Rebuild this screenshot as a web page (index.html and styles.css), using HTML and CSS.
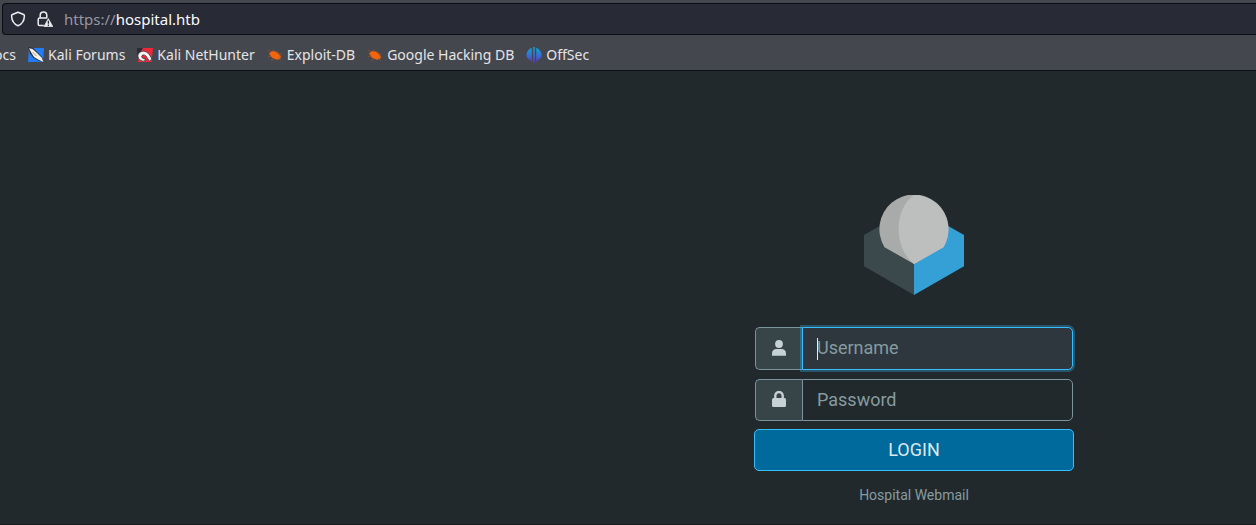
FILE: index.html
```html
<!DOCTYPE html>
<html lang="en">
<head>
<meta charset="utf-8">
<title>Hospital Webmail</title>
<link rel="stylesheet" href="styles.css">
</head>
<body>
<header class="browser">
  <div class="urlbar">
    <svg class="url-icon" viewBox="0 0 16 16" aria-hidden="true"><path d="M8 1.200 13.600 3.500Q14.400 3.800 14.400 5C14.200 10.200 11.400 13.400 8 14.800 4.600 13.400 1.800 10.200 1.600 5Q1.600 3.800 2.400 3.500Z" fill="none" stroke="#eeeef2" stroke-width="1.500" stroke-linejoin="round"/></svg>
    <svg class="url-icon" viewBox="0 0 16 16" aria-hidden="true"><path d="M3.200 7V4.400a3.300 3.300 0 0 1 6.600 0V7M6.800 14.600H2.600a1.400 1.400 0 0 1-1.400-1.400V8.500a1.400 1.400 0 0 1 1.400-1.400h7.600" fill="none" stroke="#eeeef2" stroke-width="1.500"/><path d="M11.300 7.500 16 15.800H6.800Z" fill="#eeeef2" stroke="#eeeef2" stroke-width=".6" stroke-linejoin="round"/><path d="M11.400 9.800v3M11.400 13.600v1.300" stroke="#282a36" stroke-width="1.300"/></svg>
    <div class="url"><span class="scheme">https://</span>hospital.htb</div>
  </div>
  <nav class="bookmarks">
    <a class="bookmark clipped" href="#">Kali Docs</a>
    <a class="bookmark" href="#">
      <svg class="favicon" viewBox="0 0 16 16" aria-hidden="true"><path d="M1 1h15l-1 14H0Z" fill="#237cf5"/><path d="M0 0 5 .7l9 9.300L16 15l-5-1L5 10.500 2 6.500Z" fill="#26313f"/><path d="M1 1.200 4.500 2 9 6l4.500 4.500 2 4.500-4.500-2-5-3L3.500 6Z" fill="#f6f2e8"/><path d="m4.500 5 4 4" stroke="#75777d" stroke-width=".7"/></svg>Kali Forums</a>
    <a class="bookmark" href="#">
      <svg class="favicon" viewBox="0 0 16 16" aria-hidden="true"><path d="M3 1h13l-1.500 14H1Z" fill="#ed2939"/><path d="M0 1h6L4 4.200 0 8Z" fill="#2b2d35"/><path d="M1 9.500C.5 6.500 3.500 4.200 6.500 4.300c3.500 0 6 2.700 8.300 7.700l-2.500 2.200-2.500-4C8.700 8.400 7.300 7.400 5.700 8.100c-2 1.100-.8 2.800.5 3.400l2.200.2-.8 2.500C4.200 14.400 1.300 12.500 1 9.500Z" fill="#f7f5f5" stroke="#25272f" stroke-width=".7"/></svg>Kali NetHunter</a>
    <a class="bookmark" href="#">
      <svg class="favicon" viewBox="0 0 16 16" aria-hidden="true"><path d="M2 6.500 4.600 4.200 7.800 4.300 11.500 6.300 14 9.800 13 12 9.700 12.700 5 10.800Z" fill="#f2640d"/><path d="M1 2.800 4 5M6 2.500l1 2.500M10 4l1 3 3.500-.5M12 9h3M11 11l3 2.500M7 11l-1.500 2.200H4M4 9l-3 .6" fill="none" stroke="#a5501f" stroke-width=".7"/></svg>Exploit-DB</a>
    <a class="bookmark" href="#">
      <svg class="favicon" viewBox="0 0 16 16" aria-hidden="true"><path d="M2 6.500 4.600 4.200 7.800 4.300 11.500 6.300 14 9.800 13 12 9.700 12.700 5 10.800Z" fill="#f2640d"/><path d="M1 2.800 4 5M6 2.500l1 2.500M10 4l1 3 3.500-.5M12 9h3M11 11l3 2.500M7 11l-1.500 2.200H4M4 9l-3 .6" fill="none" stroke="#a5501f" stroke-width=".7"/></svg>Google Hacking DB</a>
    <a class="bookmark" href="#">
      <svg class="favicon" viewBox="0 0 16 16" aria-hidden="true"><defs><linearGradient id="offsec" gradientUnits="userSpaceOnUse" x1="0" y1="0" x2="0" y2="16"><stop stop-color="#10a6cf"/><stop offset=".5" stop-color="#3173d5"/><stop offset="1" stop-color="#642fc4"/></linearGradient></defs><path d="M5.800.8V14.800L3.500 12.700 1 10.700A7.500 7.500 0 0 1 5.800.8ZM7.200 0h1.600v16H7.200ZM10.200.8A7.500 7.500 0 0 1 15 10.700l-2.500 2-2.300 2.100Z" fill="url(#offsec)"/></svg>OffSec</a>
  </nav>
</header>
<main class="page">
  <form class="login">
    <svg class="logo" viewBox="0 0 100 100" role="img" aria-label="Roundcube">
      <path d="M0 40 50 11.500V100L0 71.200Z" fill="#3b484c"/>
      <path d="M100 40 50 11.500V100l50-28.800Z" fill="#35a0d6"/>
      <path d="M50 69 20.500 52.200A34.600 34.600 0 1 1 79.500 52.200Z" fill="#a9abaa"/>
      <path d="M50 69C29.500 53 29.500 14 50 0A34.600 34.600 0 0 1 79.500 52.200Z" fill="#bdbfbe"/>
    </svg>
    <div class="fields">
      <div class="field active">
        <label class="tag" for="user"><svg class="glyph" viewBox="0 0 16 16" role="img" aria-label="Username"><circle cx="8" cy="4" r="3.900" fill="#c5d1d3"/><path d="M1 15.800v-2.300C1 10.600 2.800 9 5.500 9h5c2.700 0 4.500 1.600 4.500 4.500v2.300Z" fill="#c5d1d3"/></svg></label>
        <input class="input" id="user" type="text" placeholder="Username">
        <span class="caret"></span>
      </div>
      <div class="field">
        <label class="tag" for="pass"><svg class="glyph" viewBox="0 0 16 16" role="img" aria-label="Password"><path d="M4.300 8V4.700a3.700 3.700 0 0 1 7.400 0V8" fill="none" stroke="#c5d1d3" stroke-width="2.400"/><rect x="1" y="7" width="14" height="9" rx="1.500" fill="#c5d1d3"/></svg></label>
        <input class="input" id="pass" type="password" placeholder="Password">
      </div>
    </div>
    <button class="submit" type="button">LOGIN</button>
    <p class="product">Hospital Webmail</p>
  </form>
</main>
</body>
</html>
```
FILE: styles.css
```css
* {
  box-sizing: border-box;
}

body {
  margin: 0;
  min-height: 100vh;
  display: flex;
  flex-direction: column;
  background: #21292c;
  font-family: Roboto, sans-serif;
}

.browser {
  padding-top: 3px;
  background: #44474e;
  border-bottom: 1px solid #0c0d12;
  font-family: "Noto Sans", sans-serif;
  font-size: 14px;
}

.urlbar {
  display: flex;
  align-items: center;
  gap: 11px;
  height: 32px;
  margin-left: 2px;
  padding-left: 7px;
  background: #282a36;
  border: 1px solid #0c0d12;
  border-right: 0;
  border-radius: 4px 0 0 4px;
}

.url-icon {
  width: 16px;
  height: 16px;
}

.url {
  color: #fbfbfe;
  font-size: 15px;
}

.scheme {
  color: #9697a0;
}

.bookmarks {
  display: flex;
  align-items: center;
  gap: 12px;
  height: 35px;
  padding-top: 4px;
  overflow: hidden;
}

.bookmark {
  display: flex;
  align-items: center;
  gap: 4px;
  color: #e4e4e6;
  text-decoration: none;
  white-space: nowrap;
}

.clipped {
  width: 16px;
  justify-content: flex-end;
}

.favicon {
  width: 16px;
  height: 16px;
}

.page {
  flex: 1;
  display: flex;
  justify-content: center;
  padding: 124px 0 20px 572px;
  border-bottom: 1px solid #171b1e;
}

.login {
  display: flex;
  flex-direction: column;
  align-items: center;
  width: 320px;
}

.logo {
  width: 100px;
  height: 100px;
}

.fields {
  display: grid;
  gap: 9px;
  width: 100%;
  padding: 32px 1px 8px;
}

.field {
  position: relative;
  display: flex;
  height: 42px;
}

.active {
  height: 43px;
}

.tag {
  display: flex;
  align-items: center;
  justify-content: center;
  width: 47px;
  padding-bottom: 2px;
  background: #374549;
  border: 1px solid #7c949c;
  border-right: 0;
  border-radius: 5px 0 0 5px;
}

.glyph {
  width: 16px;
  height: 16px;
}

.input {
  flex: 1;
  min-width: 0;
  padding: 0 14px 2px;
  color: #c5d1d3;
  background: transparent;
  border: 1px solid #7c949c;
  border-radius: 0 5px 5px 0;
  outline: 0;
  font-family: Roboto, sans-serif;
  font-size: 18px;
}

.input::placeholder {
  color: #869ba0;
  opacity: 1;
}

.active .input {
  background: #2d373d;
  border-color: #37beff;
  box-shadow: 0 0 0 2px rgba(55, 190, 255, 0.3);
}

.caret {
  position: absolute;
  top: 11px;
  left: 62px;
  width: 1px;
  height: 22px;
  background: #e6eef0;
}

.submit {
  width: 100%;
  height: 42px;
  padding: 0 0 2px;
  color: #dce9ef;
  background: #006a9d;
  border: 1px solid #37beff;
  border-radius: 5px;
  font-family: Roboto, sans-serif;
  font-size: 18px;
}

.product {
  margin: 16px 0 0;
  color: #869ba0;
  font-size: 14px;
  line-height: 16px;
}
```
